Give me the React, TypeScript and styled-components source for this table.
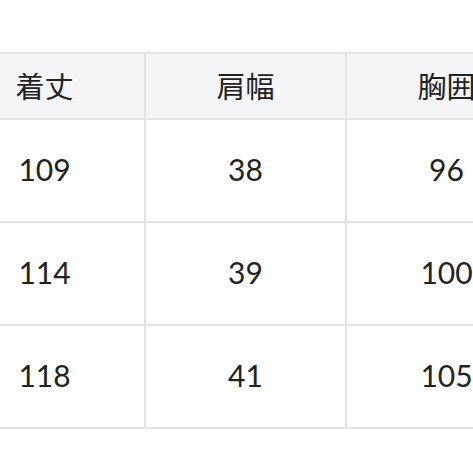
import { createGlobalStyle, styled } from 'styled-components'

const GlobalStyle = createGlobalStyle`
	html, body {
		margin: 0;
		padding: 0;
		background: #ffffff;
		overflow: hidden;
	}
`

const headers = ['着丈', '肩幅', '胸囲']

const rows = [
	['109', '38', '96'],
	['114', '39', '100'],
	['118', '41', '105'],
]

export default function App() {
	return	<>
				<GlobalStyle/>
				<Page>
					<SizeTable>
						{headers.map(h => <HeadCell key={h}>{h}</HeadCell>)}
						{rows.map((row, i) =>
							row.map((value, j) => <Cell key={`${i}-${j}`}>{value}</Cell>)
						)}
					</SizeTable>
				</Page>
			</>
}

const Page = styled.div`
	width: 473px;
	height: 473px;
	overflow: hidden;
	padding-top: 52px;
	box-sizing: border-box;
`

const SizeTable = styled.div`
	display: grid;
	grid-template-columns: repeat(3, 199px);
	grid-template-rows: 64px repeat(3, 101px);
	gap: 2px;
	padding: 2px;
	margin-left: -57px;
	width: max-content;
	background: #e4e4e6;

	font-family: Lato, "Noto Sans CJK JP", sans-serif;
	font-size: 30px;
	color: #222222;
`

const Cell = styled.div`
	background: #ffffff;
	display: flex;
	align-items: center;
	justify-content: center;
	padding-bottom: 3px;
	box-sizing: border-box;
`

const HeadCell = styled(Cell)`
	background: #f4f5f7;
	font-size: 29px;
`
